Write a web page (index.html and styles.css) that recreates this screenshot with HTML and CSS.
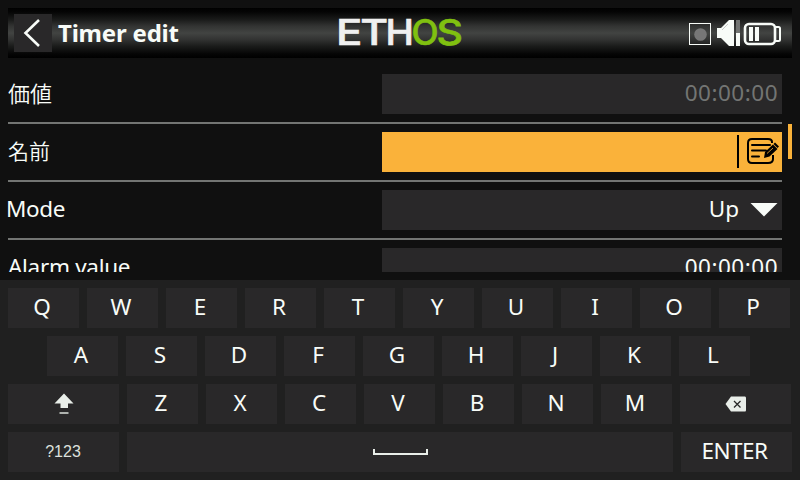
FILE: index.html
```html
<!DOCTYPE html>
<html lang="ja">
<head>
<meta charset="utf-8">
<title>Timer edit</title>
<link rel="stylesheet" href="styles.css">
</head>
<body>
<header class="topbar">
  <button class="back" aria-label="Back"><svg width="38" height="38" viewBox="0 0 38 38"><path d="M25 6L11.500 19L25 32" fill="none" stroke="#f8fcf8" stroke-width="2.600"/></svg></button>
  <h1>Timer edit</h1>
  <svg class="logo" width="130" height="50" viewBox="-2 -10 130 50">
    <g class="wordmark"><text transform="translate(-1 27) scale(1.250 1)">E</text><text transform="translate(23.300 27) scale(1.220 1)">T</text><text transform="translate(48.500 27) scale(1.090 1)">H</text></g>
    <g class="wordmark green"><text transform="translate(74.500 27) scale(1.010 1)">O</text><text transform="translate(99.500 27) scale(1.170 1)">S</text></g>
  </svg>
  <svg class="status" width="94" height="30" viewBox="0 0 94 30">
    <rect x="1.500" y="5.500" width="21" height="21" fill="none" stroke="#f8fcf8"/>
    <circle cx="12.500" cy="16.500" r="6.300" fill="#777"/>
    <path d="M29 10h4l8-8h5v26h-5l-8-8h-4z" fill="#f8fcf8"/><path d="M34 12l6-6" stroke="#aaa" stroke-width=".6"/>
    <path d="M48 2h4v13h-4z" fill="#737573"/><path d="M48 15h4v13h-4z" fill="#f8fcf8"/>
    <rect x="57" y="6" width="30" height="20" rx="4" fill="none" stroke="#f8fcf8" stroke-width="2.600"/>
    <path d="M88 9h2.500q1.500 0 1.500 1.500v11q0 1.500-1.500 1.500H88" fill="none" stroke="#f8fcf8" stroke-width="2"/>
    <path d="M61 9h4v14h-4zM67 9h4v14h-4z" fill="#f8fcf8"/>
  </svg>
</header>
<main class="form">
  <div class="row"><span class="label cjk">価値</span><div class="field muted"><span class="time">00:00:00</span></div></div>
  <div class="row"><span class="label cjk name">名前</span><div class="field active"><i class="caret"></i>
    <svg width="34" height="30" viewBox="0 0 34 30"><path d="M26 6V5Q26 2 22 2H6Q2 2 2 6V22Q2 26 6 26H22Q27 26 27 22V18" fill="none" stroke="#000" stroke-width="2"/><path d="M6 8H24M6 13.500H20M6 19.500H13" stroke="#000" stroke-width="2" stroke-linecap="round"/><path d="M18 21l1-6 8-7.500 4.500 4.500-8 7.500z" fill="#000"/><path d="M27.500 7l1.500-1.500 4 4-1.500 1.500z" fill="#000"/><path d="M21 16.500l6-5.500" stroke="#fab23a" stroke-width=".8"/></svg>
  </div></div>
  <div class="row"><span class="label mode">Mode</span><div class="field"><span class="value">Up</span><svg class="arrow" width="28" height="14" viewBox="0 0 28 14"><path d="M.5 0h27L14 13.500z" fill="#f8fcf8"/></svg></div></div>
  <div class="row"><span class="label alarm">Alarm value</span><div class="field"><span class="time">00:00:00</span></div></div>
</main>
<i class="scroll"></i>
<section class="keyboard">
  <div class="keys"><b>Q</b><b>W</b><b>E</b><b>R</b><b>T</b><b>Y</b><b>U</b><b>I</b><b>O</b><b>P</b></div>
  <div class="keys inset"><b>A</b><b>S</b><b>D</b><b>F</b><b>G</b><b>H</b><b>J</b><b>K</b><b>L</b></div>
  <div class="keys">
    <b class="wide"><svg width="20" height="22" viewBox="0 0 20 22"><path d="M10 .5l9.500 10H14V15H6.500v-4.500H.5z" fill="#e9eee9"/><path d="M5.500 19h9v2h-9z" fill="#aeb2ae"/></svg></b>
    <b>Z</b><b>X</b><b>C</b><b>V</b><b>B</b><b>N</b><b>M</b>
    <b class="wide"><svg width="22" height="16" viewBox="0 0 22 16"><path d="M6 .5H20Q21 .5 21 2V14Q21 15.500 20 15.500H6L.5 8z" fill="#e9eee9"/><path d="M9 5l6.500 6.500M15.500 5l-6.500 6.500" stroke="#292929" stroke-width="1.300"/></svg></b>
  </div>
  <div class="keys">
    <b class="wide num">?123</b>
    <b class="space"><svg width="56" height="8" viewBox="0 0 56 8"><path d="M2 1V6H55V1" fill="none" stroke="#e9eee9" stroke-width="2"/></svg></b>
    <b class="wide enter">ENTER</b>
  </div>
</section>
</body>
</html>
```
FILE: styles.css
```css
* { box-sizing: border-box; }
body {
  margin: 0;
  padding-top: 8px;
  width: 800px;
  height: 480px;
  overflow: hidden;
  background: #101010;
  color: #f8fcf8;
  font: 22.5px/30px "Noto Sans", "Noto Sans CJK JP", sans-serif;
}
svg { display: block; flex: none; }
.topbar {
  position: relative;
  display: flex;
  align-items: center;
  height: 50px;
  margin: 0 8px;
  padding-left: 6px;
  background: linear-gradient(#000 0%, #050505 8%, #1b1c1b 24%, #323332 36%, #424442 50%, #323332 63%, #1b1c1b 76%, #050505 92%, #000 100%);
}
.back { width: 38px; height: 38px; padding: 0; border: 0; background: #292829; }
h1 { margin: 0 0 0 6px; font-size: 24px; line-height: 32px; font-weight: 700; letter-spacing: -.2px; white-space: nowrap; }
.logo { position: absolute; left: 327px; top: 0; }
.wordmark { font: 500 35px Inter, sans-serif; fill: #f0f0f0; stroke: #f0f0f0; stroke-width: .6; }
.green { fill: #80c010; stroke: #80c010; }
.status { margin-left: auto; margin-right: 10px; }
.form { height: 206px; margin: 8px 18px 0 0; padding-left: 8px; overflow: hidden; }
.row {
  display: flex;
  justify-content: space-between;
  align-items: center;
  height: 58px;
  border-bottom: 2px solid #737573;
}
.label { padding-bottom: 2px; letter-spacing: -.3px; white-space: nowrap; }
.cjk { padding-bottom: 4px; font: 350 22px/30px "Noto Sans CJK JP", sans-serif; letter-spacing: 0; }
.name { font-size: 21px; }
.mode { margin-left: -2px; letter-spacing: -.4px; }
.field {
  display: flex;
  align-items: center;
  justify-content: flex-end;
  width: 400px;
  height: 40px;
  padding-right: 4px;
  background: #292829;
}
.time, .value { padding-bottom: 2px; }
.time { letter-spacing: .5px; }
.muted { color: #737573; }
.active { background: #fab23a; padding-right: 2px; }
.caret { width: 2px; height: 33px; margin: 0 7px 1px 0; background: #000; }
.arrow { margin-left: 11px; }
.scroll { position: absolute; left: 788px; top: 124px; width: 4px; height: 35px; background: #fab23a; }
.keyboard {
  display: flex;
  flex-direction: column;
  gap: 8px;
  height: 200px;
  margin-top: 8px;
  padding: 8px;
  background: #202020;
}
.keys { display: flex; gap: 8px; height: 40px; }
.inset { padding-left: 39px; }
.keys b {
  display: flex;
  flex: none;
  align-items: center;
  justify-content: center;
  width: 71px;
  padding: 0 3px 2px 0;
  font-weight: 400;
  background: #292829;
}
.keys .wide { width: 111px; padding: 0; }
.keys .num { padding-right: 1px; font: 16px "Liberation Sans", sans-serif; color: #dde0dd; }
.keys .enter { padding: 0 4px 2px 0; letter-spacing: -.5px; }
.keys .space { width: 546px; padding: 0; }
```
